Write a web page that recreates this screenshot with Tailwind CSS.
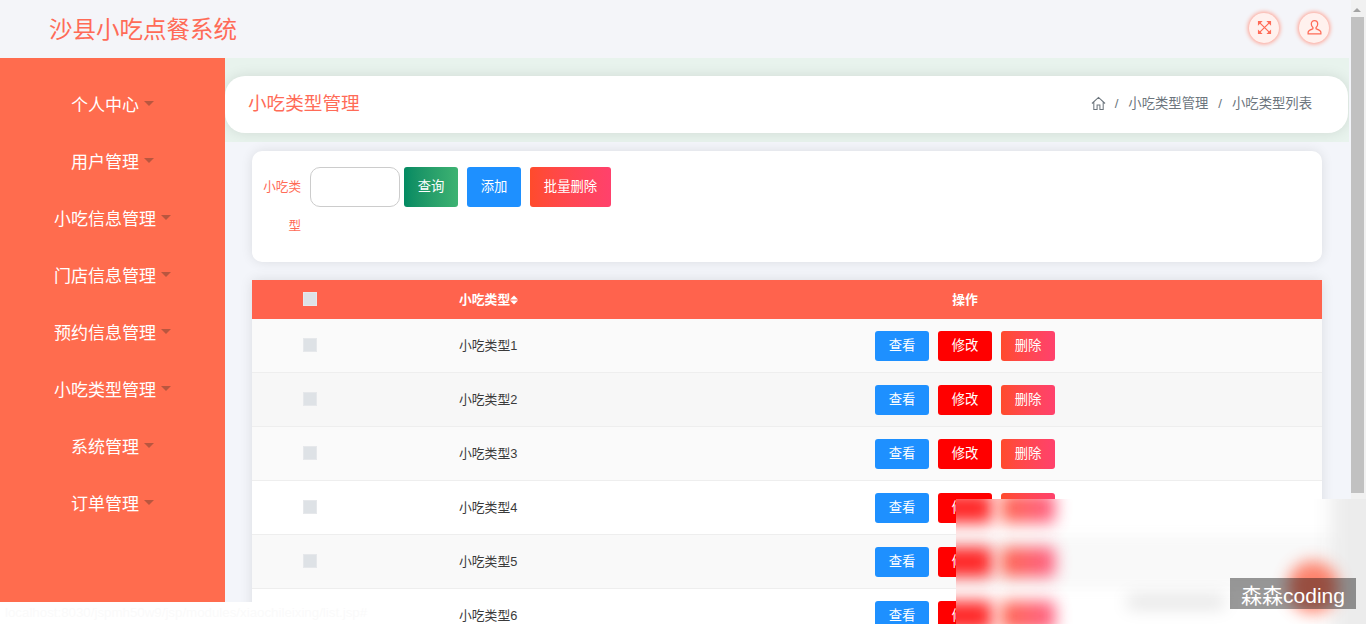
<!DOCTYPE html>
<html lang="zh-CN">
<head>
<meta charset="utf-8">
<title>沙县小吃点餐系统</title>
<script src="https://cdn.jsdelivr.net/npm/@tailwindcss/browser@4"></script>
</head>
<body class="relative h-[624px] w-[1366px] overflow-hidden bg-[#f3f5fa] font-['Liberation_Sans','Noto_Sans_CJK_SC',sans-serif]">
<div class="flex h-[624px] w-[1366px]">
  <div class="flex w-[1351px] flex-col">
    <header class="flex h-[58px] shrink-0 items-center justify-between bg-[#f4f5f9] pl-[49px] pr-[22px]">
      <div class="pt-[3px] text-[23.5px] text-[#ff6b57]">沙县小吃点餐系统</div>
      <div class="mb-[3px] flex items-center gap-[20px]">
        <div class="flex h-[30px] w-[30px] items-center justify-center rounded-full bg-[#fff1ee] shadow-[0_0_4px_1px_#ff9c8c]">
          <svg viewBox="0 0 16 16" class="h-[15px] w-[15px]" fill="#ff6b57" stroke="#ff6b57" stroke-width="1.300"><path d="M3 3l10 10M13 3L3 13"/><path stroke="none" d="M1 1h5L1 6zM15 1v5l-5-5zM15 15h-5l5-5zM1 15v-5l5 5z"/></svg>
        </div>
        <div class="flex h-[30px] w-[30px] items-center justify-center rounded-full bg-[#fff1ee] shadow-[0_0_4px_1px_#ff9c8c]">
          <svg viewBox="0 0 16 16" class="h-[17px] w-[17px]" fill="none" stroke="#ff6b57" stroke-width="1.200"><path d="M8 1.500c-2 0-3 1.400-3 3.200 0 1.300.6 2.500 1.500 3.200v1.300c-1.600.6-4.500 1.300-4.500 3.300V14h12v-1.500c0-2-2.900-2.700-4.500-3.300V7.900c.9-.7 1.500-1.900 1.500-3.200 0-1.800-1-3.200-3-3.200z"/></svg>
        </div>
      </div>
    </header>
    <div class="flex min-h-0 flex-1">
      <aside class="flex w-[225px] shrink-0 flex-col bg-[#ff6c4e] pt-[19px] text-[17px] text-white">
        <div class="flex h-[57px] items-center justify-center gap-[5px]"><span>个人中心</span><span class="mb-[5px] h-0 w-0 border-x-[5px] border-t-[5px] border-x-transparent border-t-[#b9563f]"></span></div>
        <div class="flex h-[57px] items-center justify-center gap-[5px]"><span>用户管理</span><span class="mb-[5px] h-0 w-0 border-x-[5px] border-t-[5px] border-x-transparent border-t-[#b9563f]"></span></div>
        <div class="flex h-[57px] items-center justify-center gap-[5px]"><span>小吃信息管理</span><span class="mb-[5px] h-0 w-0 border-x-[5px] border-t-[5px] border-x-transparent border-t-[#b9563f]"></span></div>
        <div class="flex h-[57px] items-center justify-center gap-[5px]"><span>门店信息管理</span><span class="mb-[5px] h-0 w-0 border-x-[5px] border-t-[5px] border-x-transparent border-t-[#b9563f]"></span></div>
        <div class="flex h-[57px] items-center justify-center gap-[5px]"><span>预约信息管理</span><span class="mb-[5px] h-0 w-0 border-x-[5px] border-t-[5px] border-x-transparent border-t-[#b9563f]"></span></div>
        <div class="flex h-[57px] items-center justify-center gap-[5px]"><span>小吃类型管理</span><span class="mb-[5px] h-0 w-0 border-x-[5px] border-t-[5px] border-x-transparent border-t-[#b9563f]"></span></div>
        <div class="flex h-[57px] items-center justify-center gap-[5px]"><span>系统管理</span><span class="mb-[5px] h-0 w-0 border-x-[5px] border-t-[5px] border-x-transparent border-t-[#b9563f]"></span></div>
        <div class="flex h-[57px] items-center justify-center gap-[5px]"><span>订单管理</span><span class="mb-[5px] h-0 w-0 border-x-[5px] border-t-[5px] border-x-transparent border-t-[#b9563f]"></span></div>
      </aside>
      <main class="min-w-0 flex-1 overflow-hidden">
        <div class="mr-[2px] h-[84px] overflow-hidden bg-[#e8f3ed] pr-[1px] pt-[18px]">
          <div class="flex h-[57px] items-center justify-between rounded-[20px] bg-white pl-[23px] pr-[36px] shadow-[0_0_14px_rgba(0,0,0,0.1)]">
            <div class="mb-[1px] text-[18.6px] text-[#ff6b57]">小吃类型管理</div>
            <div class="mb-[1px] flex items-center text-[13.33px] text-[#6c757d]">
              <svg viewBox="0 0 16 16" class="mr-[9px] h-[15px] w-[15px]" fill="none" stroke="#6c757d" stroke-width="1.100"><path d="M1 8l7-6.500L15 8M3 6.500V14.500h3.500V9.500h3v5H13V6.500"/></svg>
              <span>/</span><span class="ml-[10px]">小吃类型管理</span><span class="ml-[10px]">/</span><span class="ml-[10px]">小吃类型列表</span>
            </div>
          </div>
        </div>
        <div class="px-[27px] pt-[9px] pr-[29px]">
          <div class="flex h-[111px] rounded-[10px] bg-white pl-[11px] pt-[16px] shadow-[0_0_12px_rgba(0,0,0,0.1)]">
            <div class="w-[38px] pt-[1px] text-right text-[12.6px] leading-[39px] text-[#ff6b57]">小吃类型</div>
            <div class="ml-[9px] h-[40px] w-[90px] rounded-[10px] border border-[#ccc] bg-white"></div>
            <div class="ml-[4px] flex h-[40px] w-[54px] items-center justify-center rounded-[3px] bg-gradient-to-r from-[#028a62] to-[#3db372] pb-[1px] text-[13.33px] text-white">查询</div>
            <div class="ml-[9px] flex h-[40px] w-[54px] items-center justify-center rounded-[3px] bg-[#1e90ff] pb-[1px] text-[13.33px] text-white">添加</div>
            <div class="ml-[9px] flex h-[40px] w-[81px] items-center justify-center rounded-[3px] bg-gradient-to-r from-[#ff4b2b] to-[#ff416c] pb-[1px] text-[13.33px] text-white">批量删除</div>
          </div>
          <div class="mt-[18px] bg-white text-[12.8px] text-[#3a3a3a] shadow-[0_0_12px_rgba(0,0,0,0.1)]">
            <div class="grid h-[39px] grid-cols-[116px_240px_1fr] items-center bg-[#ff634d] font-bold text-white">
              <div class="mb-[2px] flex justify-center"><span class="h-[14px] w-[14px] border border-[#e6e8eb] bg-[#dee2e6]"></span></div>
              <div class="flex items-center pl-[91px]">小吃类型<svg viewBox="0 0 8 10" class="h-[10px] w-[8px]" fill="#fff"><path d="M0 4.400L4 .5l4 3.900zM0 5.600h8L4 9.500z"/></svg></div>
              <div class="text-center">操作</div>
            </div>
            <div class="grid h-[54px] grid-cols-[116px_240px_1fr] items-center border-b border-[#eeeeee] bg-[#fafafa]">
              <div class="mb-[2px] flex justify-center"><span class="h-[14px] w-[14px] border border-[#e6e8eb] bg-[#dee2e6]"></span></div>
              <div class="pl-[91px]">小吃类型1</div>
              <div class="flex justify-center gap-[9px] text-[13.33px] text-white"><span class="flex h-[30px] w-[54px] items-center justify-center rounded-[3px] bg-[#1e90ff]">查看</span><span class="flex h-[30px] w-[54px] items-center justify-center rounded-[3px] bg-[#ff0000]">修改</span><span class="flex h-[30px] w-[54px] items-center justify-center rounded-[3px] bg-gradient-to-r from-[#ff4b2b] to-[#ff416c]">删除</span></div>
            </div>
            <div class="grid h-[54px] grid-cols-[116px_240px_1fr] items-center border-b border-[#eeeeee] bg-[#f7f7f7]">
              <div class="mb-[2px] flex justify-center"><span class="h-[14px] w-[14px] border border-[#e6e8eb] bg-[#dee2e6]"></span></div>
              <div class="pl-[91px]">小吃类型2</div>
              <div class="flex justify-center gap-[9px] text-[13.33px] text-white"><span class="flex h-[30px] w-[54px] items-center justify-center rounded-[3px] bg-[#1e90ff]">查看</span><span class="flex h-[30px] w-[54px] items-center justify-center rounded-[3px] bg-[#ff0000]">修改</span><span class="flex h-[30px] w-[54px] items-center justify-center rounded-[3px] bg-gradient-to-r from-[#ff4b2b] to-[#ff416c]">删除</span></div>
            </div>
            <div class="grid h-[54px] grid-cols-[116px_240px_1fr] items-center border-b border-[#eeeeee] bg-[#fafafa]">
              <div class="mb-[2px] flex justify-center"><span class="h-[14px] w-[14px] border border-[#e6e8eb] bg-[#dee2e6]"></span></div>
              <div class="pl-[91px]">小吃类型3</div>
              <div class="flex justify-center gap-[9px] text-[13.33px] text-white"><span class="flex h-[30px] w-[54px] items-center justify-center rounded-[3px] bg-[#1e90ff]">查看</span><span class="flex h-[30px] w-[54px] items-center justify-center rounded-[3px] bg-[#ff0000]">修改</span><span class="flex h-[30px] w-[54px] items-center justify-center rounded-[3px] bg-gradient-to-r from-[#ff4b2b] to-[#ff416c]">删除</span></div>
            </div>
            <div class="grid h-[54px] grid-cols-[116px_240px_1fr] items-center border-b border-[#eeeeee] bg-white">
              <div class="mb-[2px] flex justify-center"><span class="h-[14px] w-[14px] border border-[#e6e8eb] bg-[#dee2e6]"></span></div>
              <div class="pl-[91px]">小吃类型4</div>
              <div class="flex justify-center gap-[9px] text-[13.33px] text-white"><span class="flex h-[30px] w-[54px] items-center justify-center rounded-[3px] bg-[#1e90ff]">查看</span><span class="flex h-[30px] w-[54px] items-center justify-center rounded-[3px] bg-[#ff0000]">修改</span><span class="flex h-[30px] w-[54px] items-center justify-center rounded-[3px] bg-gradient-to-r from-[#ff4b2b] to-[#ff416c]">删除</span></div>
            </div>
            <div class="grid h-[54px] grid-cols-[116px_240px_1fr] items-center border-b border-[#eeeeee] bg-[#f9f9f9]">
              <div class="mb-[2px] flex justify-center"><span class="h-[14px] w-[14px] border border-[#e6e8eb] bg-[#dee2e6]"></span></div>
              <div class="pl-[91px]">小吃类型5</div>
              <div class="flex justify-center gap-[9px] text-[13.33px] text-white"><span class="flex h-[30px] w-[54px] items-center justify-center rounded-[3px] bg-[#1e90ff]">查看</span><span class="flex h-[30px] w-[54px] items-center justify-center rounded-[3px] bg-[#ff0000]">修改</span><span class="flex h-[30px] w-[54px] items-center justify-center rounded-[3px] bg-gradient-to-r from-[#ff4b2b] to-[#ff416c]">删除</span></div>
            </div>
            <div class="grid h-[54px] grid-cols-[116px_240px_1fr] items-center border-b border-[#eeeeee] bg-white">
              <div class="mb-[2px] flex justify-center"><span class="h-[14px] w-[14px] border border-[#e6e8eb] bg-[#dee2e6]"></span></div>
              <div class="pl-[91px]">小吃类型6</div>
              <div class="flex justify-center gap-[9px] text-[13.33px] text-white"><span class="flex h-[30px] w-[54px] items-center justify-center rounded-[3px] bg-[#1e90ff]">查看</span><span class="flex h-[30px] w-[54px] items-center justify-center rounded-[3px] bg-[#ff0000]">修改</span><span class="flex h-[30px] w-[54px] items-center justify-center rounded-[3px] bg-gradient-to-r from-[#ff4b2b] to-[#ff416c]">删除</span></div>
            </div>
          </div>
        </div>
      </main>
    </div>
  </div>
  <div class="flex w-[15px] shrink-0 flex-col items-start bg-[#f1f1f1]">
    <span class="ml-[2px] mt-[8px] h-0 w-0 border-x-[4px] border-b-[4px] border-x-transparent border-b-[#a3a3a3]"></span>
    <div class="mt-[5px] h-[476px] w-[13px] bg-[#c1c1c1]"></div>
  </div>
</div>
<div class="absolute bottom-0 left-0 flex h-[22px] w-[380px] items-center bg-white pl-[5px] text-[13.3px] text-[#fafafa]">localhost:8030/jspmh50w9/jsp/modules/xiaochileixing/list.jsp#</div>
<div class="absolute left-[956px] top-[499px] h-[125px] w-[410px] overflow-hidden bg-white">
  <div class="absolute left-[-20px] top-[36px] h-[54px] w-[450px] bg-[#f9f9f9] blur-[6px]"></div>
  <div class="absolute left-[375px] top-[-20px] h-[170px] w-[60px] bg-[#ececec] blur-[10px]"></div>
  <div class="absolute left-[-30px] top-[-6px] h-[30px] w-[66px] rounded-[3px] bg-[#ff1010] opacity-90 blur-[8px]"></div>
  <div class="absolute left-[-30px] top-[48px] h-[30px] w-[66px] rounded-[3px] bg-[#ff1010] opacity-90 blur-[8px]"></div>
  <div class="absolute left-[-30px] top-[102px] h-[30px] w-[66px] rounded-[3px] bg-[#ff1010] opacity-90 blur-[8px]"></div>
  <div class="absolute left-[45px] top-[-6px] h-[30px] w-[54px] rounded-[3px] bg-gradient-to-r from-[#ff4b2b] to-[#ff416c] opacity-85 blur-[8px]"></div>
  <div class="absolute left-[45px] top-[48px] h-[30px] w-[54px] rounded-[3px] bg-gradient-to-r from-[#ff4b2b] to-[#ff416c] opacity-85 blur-[8px]"></div>
  <div class="absolute left-[45px] top-[102px] h-[30px] w-[54px] rounded-[3px] bg-gradient-to-r from-[#ff4b2b] to-[#ff416c] opacity-85 blur-[8px]"></div>
  <div class="absolute left-[170px] top-[96px] h-[14px] w-[100px] rounded-full bg-black/10 blur-[8px]"></div>
  <div class="absolute left-[332px] top-[62px] h-[52px] w-[50px] rounded-full bg-[#ff5a3c] opacity-75 blur-[8px]"></div>
</div>
<div class="absolute left-[1230px] top-[578px] flex h-[31px] w-[126px] items-center justify-center bg-black/40 pt-[5px] text-[21px] text-white">森森coding</div>
</body>
</html>
